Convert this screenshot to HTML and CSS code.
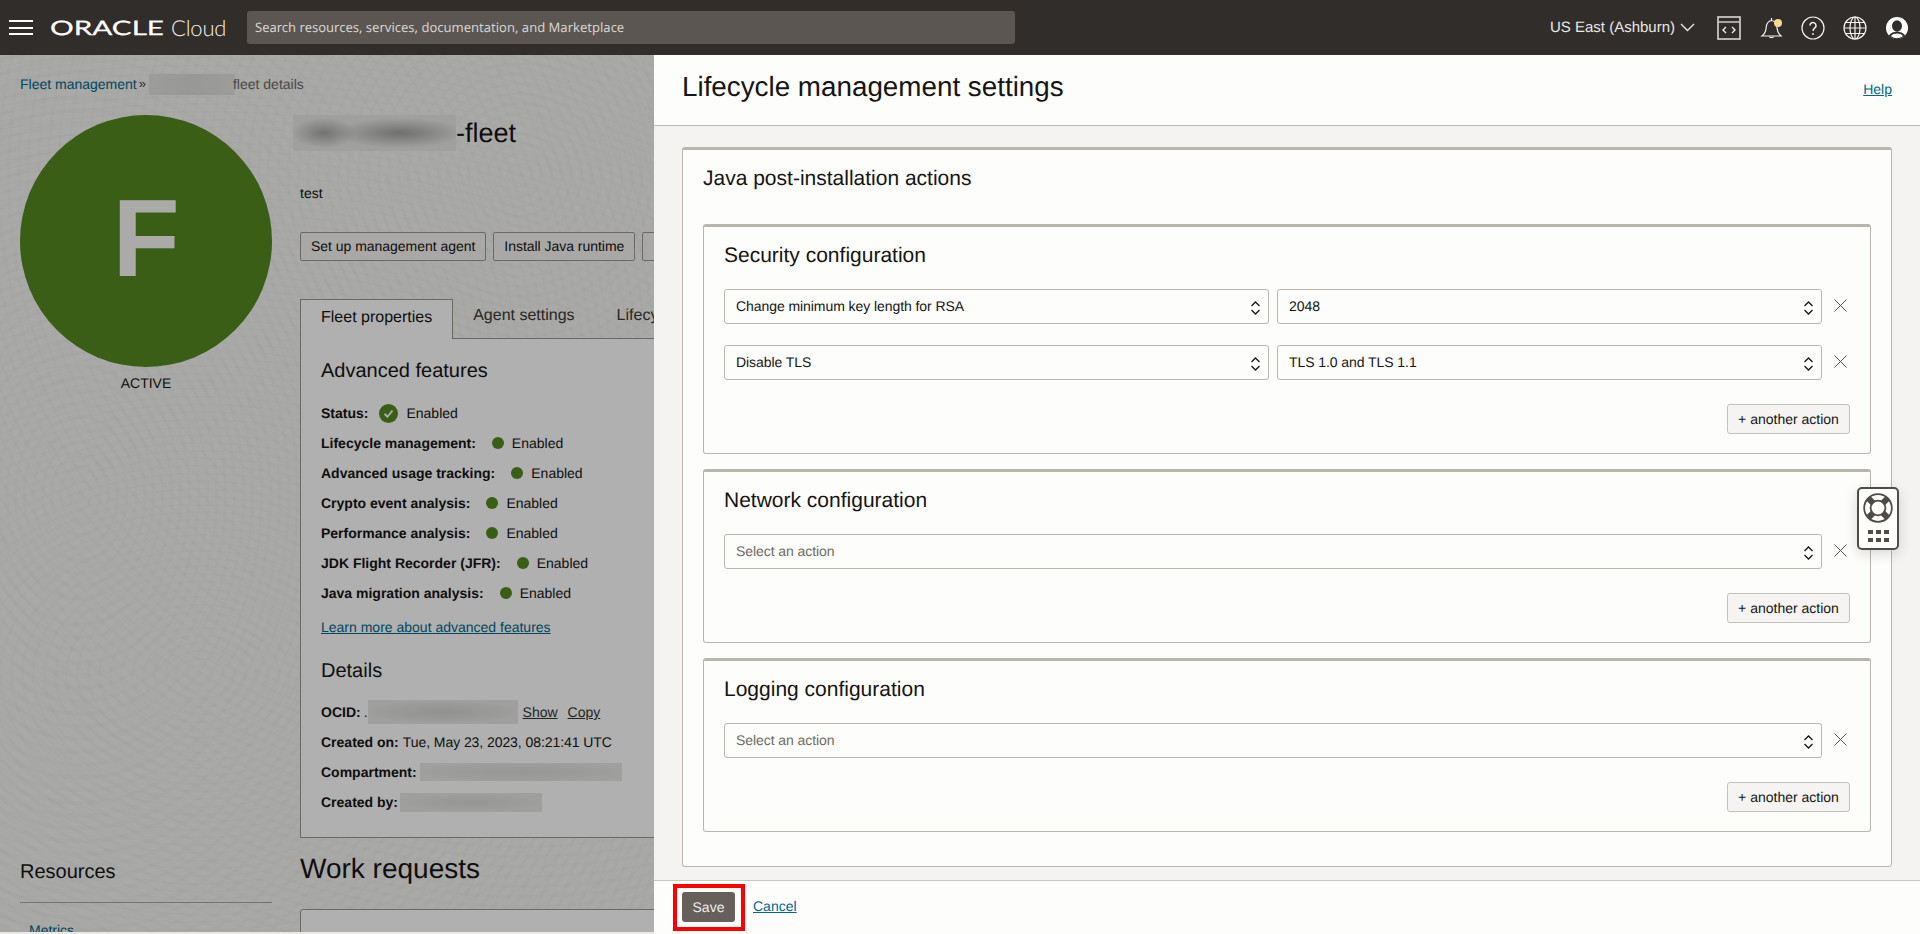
FILE: index.html
```html
<!DOCTYPE html>
<html lang="en">
<head>
<meta charset="utf-8">
<title>Lifecycle management settings</title>
<link rel="stylesheet" href="styles.css">
</head>
<body>
<div class="app">
  <header class="topbar">
    <button class="burger" aria-label="Menu"><i></i><i></i><i></i></button>
    <div class="brand">
      <svg class="oracle" width="114" height="20" viewBox="0 0 114 20"><text x="0" y="17" textLength="114" lengthAdjust="spacingAndGlyphs">ORACLE</text></svg>
      <span class="cloud">Cloud</span>
    </div>
    <div class="search">Search resources, services, documentation, and Marketplace</div>
    <div class="region">US East (Ashburn)
      <svg width="15" height="9" viewBox="0 0 15 9"><path d="M1 1l6.500 6.500L14 1" fill="none" stroke="#e8e8e6" stroke-width="1.400"/></svg>
    </div>
    <svg class="ticon first" width="24" height="24" viewBox="0 0 24 24" fill="none" stroke="#cfcdca"><rect x="1" y="1" width="22" height="22" stroke-width="1.700"/><path d="M1 6h22" stroke-width="1.500"/><path d="M9 11l-3 3 3 3M15 11l3 3-3 3" stroke="#eee" stroke-width="1.400"/></svg>
    <svg class="ticon" width="24" height="24" viewBox="-1.500 0 24 24" fill="none" stroke="#f2f2f0" stroke-width="1.200"><path d="M1.500 20c2.500-2 3.800-4 4.100-8 .3-4 2-7 5.400-7.500 3 .3 5 3 5.400 6.500.4 4 1.400 7 4.100 9z"/><path d="M11 4.500V2"/><path d="M8.500 20.500a3 2.500 0 0 0 5 0"/><circle cx="17.500" cy="7" r="4" fill="#f8d98f" stroke="none"/></svg>
    <svg class="ticon" width="24" height="24" viewBox="0 0 24 24" fill="none" stroke="#f2f2f0" stroke-width="1.200"><circle cx="12" cy="12" r="11"/><path d="M9 9.500a3 3 0 1 1 4.800 2.400c-1.200.9-1.800 1.500-1.800 3" stroke-width="1.500"/><circle cx="12" cy="18" r=".9" fill="#f2f2f0" stroke="none"/></svg>
    <svg class="ticon" width="24" height="24" viewBox="0 0 24 24" fill="none" stroke="#f2f2f0" stroke-width="1.200"><circle cx="12" cy="12" r="11"/><ellipse cx="12" cy="12" rx="5" ry="11"/><path d="M12 1v22M1 12h22M2.500 6.500h19M2.500 17.500h19"/></svg>
    <svg class="ticon" width="24" height="24" viewBox="0 0 24 24"><circle cx="12" cy="12" r="11" fill="#fff"/><ellipse cx="12" cy="10" rx="5" ry="5.800" fill="#312d2a"/><path d="M3.800 19.500c2-3 5-3.800 8.200-3.800s6.200.8 8.200 3.800a11 11 0 0 1-16.400 0z" fill="#312d2a"/><path d="M6 20c1.500-1.800 3.600-2.500 6-2.500s4.500.7 6 2.500c-3.500 3-8.500 3-12 0z" fill="#fff"/></svg>
  </header>

  <div class="page">
    <nav class="crumbs"><a href="#">Fleet management</a><span class="sep">»</span><span class="blur b-crumb"></span><span class="crumb-tail">fleet details</span></nav>
    <div class="columns">
      <aside class="side">
        <div class="avatar">F</div>
        <div class="state">ACTIVE</div>
        <h3 class="res">Resources</h3>
        <a class="metrics" href="#">Metrics</a>
      </aside>
      <main class="main">
        <h1 class="title"><span class="blur b-title"></span>-fleet</h1>
        <p class="desc">test</p>
        <div class="actions">
          <button class="btn">Set up management agent</button>
          <button class="btn">Install Java runtime</button>
          <button class="btn">Remove Java runtime</button>
        </div>
        <div class="tabs">
          <span class="tab active">Fleet properties</span>
          <span class="tab">Agent settings</span>
          <span class="tab">Lifecycle management settings</span>
        </div>
        <section class="tabpanel">
          <h2 class="h-sub">Advanced features</h2>
          <div class="rows">
            <div class="row"><b>Status:</b>
              <svg class="check" width="19" height="19" viewBox="0 0 19 19"><circle cx="9.500" cy="9.500" r="9.500" fill="#548821"/><path d="M5.500 9.800l3 3 5-6.300" fill="none" stroke="#f6f6f4" stroke-width="2"/></svg>
              <span>Enabled</span></div>
            <div class="row"><b>Lifecycle management:</b><i class="dot"></i><span>Enabled</span></div>
            <div class="row"><b>Advanced usage tracking:</b><i class="dot"></i><span>Enabled</span></div>
            <div class="row"><b>Crypto event analysis:</b><i class="dot"></i><span>Enabled</span></div>
            <div class="row"><b>Performance analysis:</b><i class="dot"></i><span>Enabled</span></div>
            <div class="row"><b>JDK Flight Recorder (JFR):</b><i class="dot"></i><span>Enabled</span></div>
            <div class="row"><b>Java migration analysis:</b><i class="dot"></i><span>Enabled</span></div>
          </div>
          <a class="learn" href="#">Learn more about advanced features</a>
          <h2 class="h-sub details">Details</h2>
          <div class="rows tight">
            <div class="row info"><b>OCID:</b><span class="ocid-dot">.</span><span class="blur b-ocid"></span><a class="plain show" href="#">Show</a><a class="plain copy" href="#">Copy</a></div>
            <div class="row info"><b>Created on:</b><span class="val">Tue, May 23, 2023, 08:21:41 UTC</span></div>
            <div class="row info"><b>Compartment:</b><span class="blur b-comp"></span></div>
            <div class="row info"><b>Created by:</b><span class="blur b-by"></span></div>
          </div>
        </section>
        <h2 class="work">Work requests</h2>
        <div class="worktable"></div>
      </main>
    </div>
    <div class="scrim"></div>
  </div>

  <aside class="drawer">
    <div class="drawer-head">
      <h1>Lifecycle management settings</h1>
      <a href="#">Help</a>
    </div>
    <div class="drawer-body">
      <div class="card">
        <h2>Java post-installation actions</h2>

        <section class="group">
          <h3>Security configuration</h3>
          <div class="action-row">
            <div class="sel"><span>Change minimum key length for RSA</span><svg class="updown" width="11" height="16" viewBox="0 0 11 16"><path d="M1.500 6l4-4 4 4M1.500 10l4 4 4-4" fill="none" stroke="#161513" stroke-width="1.300"/></svg></div>
            <div class="sel"><span>2048</span><svg class="updown" width="11" height="16" viewBox="0 0 11 16"><path d="M1.500 6l4-4 4 4M1.500 10l4 4 4-4" fill="none" stroke="#161513" stroke-width="1.300"/></svg></div>
            <svg class="x" width="13" height="13" viewBox="0 0 13 13"><path d="M.5.500l12 12M12.500.500l-12 12" stroke="#55524e" stroke-width="1"/></svg>
          </div>
          <div class="action-row">
            <div class="sel"><span>Disable TLS</span><svg class="updown" width="11" height="16" viewBox="0 0 11 16"><path d="M1.500 6l4-4 4 4M1.500 10l4 4 4-4" fill="none" stroke="#161513" stroke-width="1.300"/></svg></div>
            <div class="sel"><span>TLS 1.0 and TLS 1.1</span><svg class="updown" width="11" height="16" viewBox="0 0 11 16"><path d="M1.500 6l4-4 4 4M1.500 10l4 4 4-4" fill="none" stroke="#161513" stroke-width="1.300"/></svg></div>
            <svg class="x" width="13" height="13" viewBox="0 0 13 13"><path d="M.5.500l12 12M12.500.500l-12 12" stroke="#55524e" stroke-width="1"/></svg>
          </div>
          <div class="add-wrap"><button class="add">+ another action</button></div>
        </section>

        <section class="group">
          <h3>Network configuration</h3>
          <div class="action-row">
            <div class="sel empty"><span>Select an action</span><svg class="updown" width="11" height="16" viewBox="0 0 11 16"><path d="M1.500 6l4-4 4 4M1.500 10l4 4 4-4" fill="none" stroke="#161513" stroke-width="1.300"/></svg></div>
            <svg class="x" width="13" height="13" viewBox="0 0 13 13"><path d="M.5.500l12 12M12.500.500l-12 12" stroke="#55524e" stroke-width="1"/></svg>
          </div>
          <div class="add-wrap"><button class="add">+ another action</button></div>
        </section>

        <section class="group">
          <h3>Logging configuration</h3>
          <div class="action-row">
            <div class="sel empty"><span>Select an action</span><svg class="updown" width="11" height="16" viewBox="0 0 11 16"><path d="M1.500 6l4-4 4 4M1.500 10l4 4 4-4" fill="none" stroke="#161513" stroke-width="1.300"/></svg></div>
            <svg class="x" width="13" height="13" viewBox="0 0 13 13"><path d="M.5.500l12 12M12.500.500l-12 12" stroke="#55524e" stroke-width="1"/></svg>
          </div>
          <div class="add-wrap"><button class="add">+ another action</button></div>
        </section>
      </div>
    </div>
    <footer class="drawer-foot">
      <button class="save">Save</button>
      <a href="#">Cancel</a>
      <div class="callout"></div>
    </footer>
  </aside>

  <div class="helper">
    <svg width="30" height="30" viewBox="0 0 30 30"><circle cx="15" cy="15" r="13.800" fill="none" stroke="#4f4c48" stroke-width="1.800"/><circle cx="15" cy="15" r="7.400" fill="none" stroke="#4f4c48" stroke-width="1.800"/><path d="M5.200 5.200l5 5M24.800 5.200l-5 5M5.200 24.800l5-5M24.800 24.800l-5-5" stroke="#4f4c48" stroke-width="6"/></svg>
    <div class="grip"><i></i><i></i><i></i><i></i><i></i><i></i></div>
  </div>
</div>
</body>
</html>
```
FILE: styles.css
```css
* { box-sizing: border-box; }
html, body { margin: 0; height: 100%; overflow: hidden; }
body { font-family: "Liberation Sans", Arial, sans-serif; font-size: 14px; color: #161513; background: #e9e9e2; text-rendering: geometricPrecision; }
a { color: #00688c; }
h1, h2, h3, p { margin: 0; font-weight: 400; }
button { font-family: inherit; text-rendering: geometricPrecision; }

.app { position: relative; width: 1920px; height: 934px; overflow: hidden; }

/* top bar */
.topbar { height: 55px; background: #312d2a; display: flex; align-items: center; color: #fff; }
.burger { width: 24px; height: 15px; margin-left: 9px; padding: 0; border: 0; background: none; display: flex; flex-direction: column; justify-content: space-between; }
.burger i { display: block; height: 2px; background: #fff; }
.brand { display: flex; align-items: center; margin-left: 17px; width: 197px; }
.oracle { flex: none; }
.oracle text { font-family: Lato, "Liberation Sans", sans-serif; font-size: 20px; font-weight: 400; fill: #fff; stroke: #fff; stroke-width: .25px; }
.cloud { margin-left: 7px; font-family: Lato, "Liberation Sans", sans-serif; font-weight: 300; font-size: 22px; letter-spacing: -.2px; color: #f0efed; }
.search { width: 768px; height: 33px; background: #5b5651; border-radius: 3px; padding-left: 8px; line-height: 33px; font-family: "Noto Sans", sans-serif; font-size: 13px; color: #d6d3cf; }
.region { margin-left: auto; display: flex; align-items: center; gap: 5px; font-size: 15px; color: #e8e8e6; }
.ticon { margin-left: 18px; flex: none; }
.ticon.first { margin-left: 22px; }
.ticon:last-child { margin-right: 11px; }

/* page under the drawer */
.page { position: relative; height: 877px; overflow: hidden; background-color: #f5f5f3;
  background-image:
    repeating-radial-gradient(ellipse 120px 170px at 80px 440px, rgba(0,0,0,.012) 0 3px, transparent 3px 9px),
    repeating-radial-gradient(ellipse 200px 140px at 200px 620px, rgba(0,0,0,.01) 0 3px, transparent 3px 11px),
    repeating-radial-gradient(circle at 520px 120px, rgba(0,0,0,.01) 0 3px, transparent 3px 10px);
  padding-top: 19px; }
.scrim { position: absolute; inset: 0; background: rgba(0,0,0,.31); }
.crumbs { height: 20px; margin-left: 20px; display: flex; align-items: center; line-height: 20px; color: #6c6a66; }
.crumbs a { text-decoration: none; }
.sep { margin: 0 3px 0 2px; font-size: 13px; color: #333; }
.crumb-tail { color: #6c6a66; }
.columns { display: flex; margin-top: 21px; }
.side { width: 300px; flex: none; padding-left: 20px; padding-right: 28px; }
.avatar { width: 252px; height: 252px; padding-bottom: 6px; border-radius: 50%; background: #548821; color: #f6f6f4; font-size: 110px; font-weight: 700; display: flex; align-items: center; justify-content: center; }
.state { margin-top: 6px; width: 252px; text-align: center; line-height: 20px; }
.res { margin-top: 467px; font-size: 20px; line-height: 24px; padding-bottom: 18px; border-bottom: 1px solid #aaa; }
.metrics { display: block; margin: 19px 0 0 9px; text-decoration: none; }

.main { flex: 1; }
.title { font-size: 27px; line-height: 36px; margin-left: -7px; display: flex; align-items: center; }
.desc { margin-top: 32px; line-height: 20px; }
.actions { margin-top: 29px; display: flex; gap: 7px; white-space: nowrap; }
.btn { height: 29px; padding: 0 10px 2px; background: #f5f4f2; border: 1px solid #9b9893; border-radius: 2px; font-size: 14px; letter-spacing: -.03px; color: #161513; }
.tabs { margin-top: 38px; height: 40px; display: flex; align-items: stretch; border-bottom: 1px solid #9b9893; }
.tab { padding: 0 21px; line-height: 34px; font-size: 16px; color: #3b3936; }
.tab.active { height: 40px; background: #fff; border: 1px solid #9b9893; border-bottom: 0; padding: 0 20px; line-height: 36px; color: #161513; }
.tabs .tab:nth-child(2) { padding-left: 20px; }
.tabpanel { background: #fff; border-left: 1px solid #9b9893; border-bottom: 1px solid #9b9893; padding: 20px 0 21px 20px; height: 499px; }
.h-sub { font-size: 20px; line-height: 24px; }
.rows { margin-top: 15px; }
.row { height: 30px; display: flex; align-items: center; }
.row .dot { width: 12px; height: 12px; border-radius: 50%; background: #548821; margin: 0 8px 0 16px; }
.check { margin: 0 8px 0 11px; }
.learn { display: block; margin-top: 9px; line-height: 20px; }
.details { margin-top: 22px; }
.rows.tight { margin-top: 14px; }
.info .val { margin-left: 4px; letter-spacing: -.07px; }
.ocid-dot { margin-left: 3px; }
.plain { color: #333; }
.show { margin-left: 5px; }
.copy { margin-left: 10px; }
.work { margin-top: 13px; font-size: 28px; line-height: 36px; }
.worktable { margin-top: 22px; height: 100px; background: #fff; border: 1px solid #9b9893; border-radius: 3px; }

/* redaction blurs */
.blur { display: inline-block; flex: none; background: #e8e8e6; }
.b-crumb { width: 86px; height: 21px; margin-right: -2px; background: linear-gradient(90deg, #e3e3e1, #dcdcda 50%, #e3e3e1); }
.b-title { width: 163px; height: 36px; background: radial-gradient(ellipse 32px 15px at 31px 18px, #a6a6a4, transparent), radial-gradient(ellipse 64px 15px at 107px 18px, #a2a2a0, transparent), #e8e8e6; }
.b-ocid { width: 150px; height: 24px; background: radial-gradient(ellipse 76px 12px at 50% 50%, #d2d2d0, #e6e6e4); }
.b-comp { width: 202px; height: 18px; margin-left: 3px; background: radial-gradient(ellipse 104px 9px at 50% 50%, #dadad8, #e6e6e4); }
.b-by { width: 142px; height: 19px; margin-left: 2px; background: radial-gradient(ellipse 72px 9px at 50% 50%, #dadad8, #e6e6e4); }

/* drawer */
.drawer { position: absolute; top: 55px; left: 654px; right: 0; bottom: 0; display: flex; flex-direction: column; background: #fdfdfb; }
.drawer-head { height: 71px; flex: none; display: flex; align-items: center; justify-content: space-between; padding: 0 28px 6px; border-bottom: 1px solid #bdbbb6; }
.drawer-head h1 { font-size: 27.800px; line-height: 36px; }
.drawer-head a { margin-top: 4px; }
.drawer-body { flex: 1; background: #f4f3f2; padding: 21px 28px 13px; overflow: hidden; }
.card { background: #fdfdfb; border: 1px solid #b9b6af; border-top-width: 3px; border-radius: 3px; height: 720px; padding: 17px 20px 0 20px; }
.card > h2 { font-size: 21px; line-height: 24px; margin-bottom: 33px; }
.group { border: 1px solid #b9b6af; border-top-width: 3px; border-radius: 3px; padding: 17px 20px 19px; margin-bottom: 15px; }
.group h3 { font-size: 21px; line-height: 24px; margin-bottom: 21px; }
.action-row { display: flex; align-items: center; gap: 8px; height: 35px; margin-bottom: 21px; }
.action-row:nth-last-child(2) { margin-bottom: 24px; }
.sel { flex: 1; height: 35px; border: 1px solid #b9b6af; border-radius: 3px; background: #fdfdfb; display: flex; align-items: center; justify-content: space-between; padding: 0 7px 0 11px; }
.sel span { margin-top: -2px; letter-spacing: -.07px; }
.sel.empty { color: #6f6b66; }
.updown { flex: none; margin-top: 2px; }
.x { flex: none; margin: -2px 3px 0 4px; }
.add-wrap { display: flex; justify-content: flex-end; }
.add { height: 30px; width: 123px; padding: 0; background: #f5f4f2; border: 1px solid #c4c1bb; border-radius: 3px; font-size: 14px; color: #161513; }
.drawer-foot { position: relative; height: 54px; flex: none; border-top: 1px solid #c9c7c2; display: flex; align-items: flex-start; padding: 11px 0 0 28px; background: #fdfdfb; }
.save { width: 53px; height: 30px; padding: 0; border: 0; border-radius: 3px; background: #665f5b; color: #eee; font-size: 14px; }
.drawer-foot a { margin: 6px 0 0 18px; }
.callout { position: absolute; left: 19px; top: 3px; width: 72px; height: 47px; border: 4px solid #f00; }

/* floating helper */
.helper { position: absolute; left: 1857px; top: 487px; width: 42px; height: 63px; background: #fdfdfb; border: 2px solid #4f4c48; border-radius: 5px; box-shadow: 0 4px 14px rgba(0,0,0,.14); display: flex; flex-direction: column; align-items: center; padding-top: 4px; }
.grip { margin-top: 7px; display: grid; grid-template-columns: repeat(3, 5px); column-gap: 3px; row-gap: 4px; }
.grip i { width: 5px; height: 4px; background: #4f4c48; }
```
